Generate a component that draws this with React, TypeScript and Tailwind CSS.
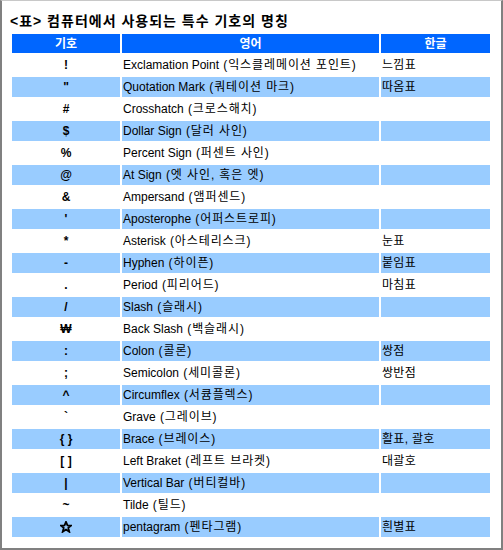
const rows: [string, string, string][] = [
  ["!", "Exclamation Point (익스클레메이션 포인트)", "느낌표"],
  ["\"", "Quotation Mark (쿼테이션 마크)", "따옴표"],
  ["#", "Crosshatch (크로스해치)", ""],
  ["$", "Dollar Sign (달러 사인)", ""],
  ["%", "Percent Sign (퍼센트 사인)", ""],
  ["@", "At Sign (엣 사인, 혹은 엣)", ""],
  ["&", "Ampersand (앰퍼센드)", ""],
  ["'", "Aposterophe (어퍼스트로피)", ""],
  ["*", "Asterisk (아스테리스크)", "눈표"],
  ["-", "Hyphen (하이픈)", "붙임표"],
  [".", "Period (피리어드)", "마침표"],
  ["/", "Slash (슬래시)", ""],
  ["₩", "Back Slash (백슬래시)", ""],
  [":", "Colon (콜론)", "쌍점"],
  [";", "Semicolon (세미콜론)", "쌍반점"],
  ["^", "Circumflex (서큠플렉스)", ""],
  ["`", "Grave (그레이브)", ""],
  ["{ }", "Brace (브레이스)", "활표, 괄호"],
  ["[ ]", "Left Braket (레프트 브라켓)", "대괄호"],
  ["|", "Vertical Bar (버티컬바)", ""],
  ["~", "Tilde (틸드)", ""],
  ["☆", "pentagram (펜타그램)", "흰별표"],
];

const font = { fontFamily: '"Liberation Sans", "Noto Sans CJK KR", sans-serif' };

function Star() {
  // bold outlined star, like the bitmap ☆ in the screenshot
  return (
    <svg width="12" height="12" viewBox="0 0 12 12" aria-label="☆">
      <polygon
        points="6,0.8 7.5,4.3 11.2,4.5 8.3,6.9 9.3,10.8 6,8.6 2.7,10.8 3.7,6.9 0.8,4.5 4.5,4.3"
        fill="none"
        stroke="#000"
        strokeWidth="1.8"
        strokeLinejoin="miter"
      />
    </svg>
  );
}

function EnCell({ text }: { text: string }) {
  const cut = text.indexOf(" (");
  const word = text.slice(0, cut);
  const ko = text.slice(cut);
  return (
    <>
      <span>{word}</span>
      <span className="tracking-[0.9px] whitespace-pre">{ko}</span>
    </>
  );
}

export default function App() {
  return (
    <div
      className="w-[503px] h-[550px] bg-white border-t border-t-[#c8c8c8] border-l-2 border-r-2 border-b-2 border-[#808080] text-black"
      style={font}
    >
      <div className="pl-[8px] pt-[12px] h-[33px] text-[14px] font-bold leading-[16px] tracking-[1px]">
        &lt;표&gt; 컴퓨터에서 사용되는 특수 기호의 명칭
      </div>
      <div className="ml-[10px] grid grid-cols-[108px_257px_109px] gap-[2px] text-[12px]">
        <div className="h-[19px] bg-[#0066ff] text-white font-bold flex items-center justify-center">기호</div>
        <div className="h-[19px] bg-[#0066ff] text-white font-bold flex items-center justify-center">영어</div>
        <div className="h-[19px] bg-[#0066ff] text-white font-bold flex items-center justify-center">한글</div>
        {rows.map(([sym, en, ko], i) => {
          const bg = i % 2 === 1 ? "bg-[#99ccff]" : "bg-white";
          return [
            <div key={`s${i}`} className={`h-[20px] ${bg} flex items-center justify-center font-bold`}>
              {sym === "☆" ? <Star /> : sym}
            </div>,
            <div key={`e${i}`} className={`h-[20px] ${bg} flex items-center pl-[1px] whitespace-nowrap`}>
              <EnCell text={en} />
            </div>,
            <div key={`k${i}`} className={`h-[20px] ${bg} flex items-center pl-[1px] whitespace-nowrap tracking-[0.3px]`}>
              {ko}
            </div>,
          ];
        })}
      </div>
    </div>
  );
}
